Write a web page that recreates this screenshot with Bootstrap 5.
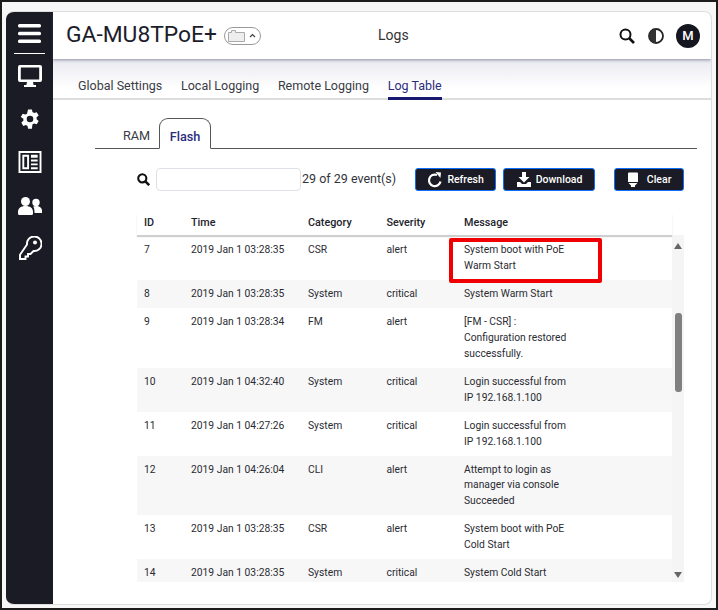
<!DOCTYPE html>
<html lang="en">
<head>
    <meta charset="UTF-8">
    <meta name="viewport" content="width=device-width, initial-scale=1.0">
    <title>Logs</title>
    <link rel="stylesheet" href="https://cdn.jsdelivr.net/npm/bootstrap@5.3.0/dist/css/bootstrap.min.css">
    <style>
        html, body { height: 100%; overflow: hidden; }
        body { font-family: Roboto, "Liberation Sans", sans-serif; color: #22232b; background: #fff; }
        .shot-frame { width: 718px; height: 610px; border: 2px solid #1c1c1c; padding: 9px 4px 3px 4px; background: #f7f7f7; }
        .app-card { height: 100%; background: #fff; border: 1px solid #ddd; border-left: 0; border-radius: 8px; overflow: hidden; }
        .side-rail { width: 47px; flex: none; background: #1a1b24; padding-top: 12px; }
        .side-rail svg { display: block; fill: #fff; }
        .rail-line { width: 31px; height: 1px; background: #fff; margin: 10px 0 11px; }
        .rail-gap { margin-bottom: 21px; }
        .rail-gap-wide { margin-bottom: 24px; }
        .top-bar { height: 47px; padding: 0 11px 0 13px; position: relative; z-index: 2; box-shadow: 0 1px 3px rgba(70,70,100,.55); background: #fff; }
        .dev-name { font-size: 22.8px; color: #1c1d2b; line-height: 1; }
        .port-pill { width: 37px; height: 18px; margin-left: 7px; border: 1px solid #999; border-radius: 9px; }
        .page-name { font-size: 14px; color: #333; position: absolute; left: 325px; top: 13px; }
        .contrast-icon { margin: 0 12px 0 13px; }
        .avatar-dot { width: 24px; height: 24px; border-radius: 50%; background: #15161f; color: #fff; font-size: 13px; font-weight: 500; }
        .sub-tabs { height: 41px; padding-left: 25px; gap: 18.7px; background: linear-gradient(#e9e9f1, #fff 75%); border-bottom: 2px solid #ddd; }
        .sub-tabs .nav-link { padding: 0; height: 41px; line-height: 54px; font-size: 12.5px; color: #3a3b44; }
        .sub-tabs .nav-link.active { color: #2b2c7c; border-bottom: 3px solid #17186e; }
        .log-pane { padding: 18px 14px 0 42px; }
        .log-tabs { border-bottom: 1px solid #555; height: 31px; padding-left: 28px; }
        .log-tabs .nav-link { padding: 0; font-size: 12.7px; height: 31px; line-height: 35px; color: #3a3b44; border: 0; }
        .log-tabs .ram-tab { width: 36px; }
        .log-tabs .nav-link.active { width: 52px; text-align: center; color: #2b2c7c; font-weight: 500; border: 1px solid #555; border-bottom: 1px solid #fff; border-radius: 9px 9px 0 0; background: #fff; }
        .tool-row { padding: 19px 14px 0 84px; height: 42px; }
        .find-box { width: 145px; height: 23px; margin-left: 6px; padding: 0 6px; border: 1px solid #dde0e6; border-radius: 4px; font-size: 12px; }
        .find-count { font-size: 12.5px; margin-left: 1px; color: #33343c; white-space: nowrap; }
        .dark-btn { height: 23px; padding: 0; font-size: 10.5px; font-weight: 500; background: #1a1b24; color: #fff; border: 1px solid #0d6efd; border-radius: 3px; }
        .dark-btn svg { fill: #fff; flex: none; }
        .refresh-btn { width: 81px; margin-left: 19px; }
        .download-btn { width: 92px; margin-left: 7px; }
        .clear-btn { width: 70px; margin-left: 19px; }
        .log-box { margin: 22px 0 0 84px; width: 547px; height: 368px; position: relative; }
        .log-head { font-size: 10.8px; font-weight: 500; height: 22px; width: 535px; line-height: 20px; box-shadow: 0 2px 1px #cfcfcf; position: relative; z-index: 1; }
        .log-rows { width: 535px; height: 347px; padding-top: 1px; overflow: hidden; }
        .log-table { table-layout: fixed; width: 535px; margin: 0; font-size: 10.3px; line-height: 15.65px; color: #2a2b33; }
        .log-table td { padding: 6.3px 7px; vertical-align: top; border: 0; }
        .log-head span { display: block; padding: 0 7px; }
        .log-table tr:nth-child(even) td { background: #f7f7f7; }
        .msg-text { max-width: 112px; }
        .col-id { width: 47px; } .col-time { width: 117px; } .col-cat { width: 78.5px; } .col-sev { width: 77.5px; }
        .head-msg { flex: 1; }
        .fake-scroll { width: 12px; flex: none; height: 347px; background: #f5f5f5; padding-top: 8px; }
        .scroll-up { border: 4px solid transparent; border-top: 0; border-bottom: 6px solid #666; }
        .scroll-down { border: 4px solid transparent; border-bottom: 0; border-top: 6px solid #666; margin-bottom: 4px; }
        .scroll-thumb { width: 7px; height: 79px; background: #808080; border-radius: 3px; margin-top: 64px; }
        .scroll-fill { flex: 1; }
        .red-mark { position: absolute; left: 312px; top: 25px; width: 153px; height: 45px; border: 4px solid #f00000; border-radius: 2px; }
    </style>
</head>
<body>
<div class="shot-frame">
<div class="app-card d-flex">
    <div class="side-rail d-flex flex-column align-items-center">
        <svg width="23" height="19" viewBox="0 0 23 19"><rect width="23" height="3.4" rx="1.5"/><rect y="7.8" width="23" height="3.4" rx="1.5"/><rect y="15.6" width="23" height="3.4" rx="1.5"/></svg>
        <div class="rail-line"></div>
        <svg class="rail-gap" width="24" height="22" viewBox="0 0 24 22"><path fill-rule="evenodd" d="M2 0h20a2 2 0 0 1 2 2v13a2 2 0 0 1-2 2h-7l.6 3H18v2H6v-2h2.4l.6-3H2a2 2 0 0 1-2-2V2a2 2 0 0 1 2-2zm.8 2.6v11.8h18.4V2.6z"/></svg>
        <svg class="rail-gap" width="22" height="22" viewBox="0 0 16 16"><path fill-rule="evenodd" d="M9.4 1l.4 1.9a5.4 5.4 0 0 1 1.2.7l1.9-.6 1.4 2.4-1.5 1.3a5.4 5.4 0 0 1 0 1.4l1.500 1.300-1.400 2.400-1.900-.6a5.400 5.400 0 0 1-1.200.7L9.400 15H6.600l-.4-1.900a5.400 5.400 0 0 1-1.200-.7l-1.900.6-1.400-2.400 1.500-1.300a5.400 5.400 0 0 1 0-1.400L1.300 6.600l1.400-2.400 1.900.6a5.400 5.400 0 0 1 1.200-.7L6.600 1zM8 5.600a2.400 2.400 0 1 0 0 4.800 2.400 2.400 0 0 0 0-4.800z"/></svg>
        <svg class="rail-gap-wide" width="24" height="22" viewBox="0 0 24 23"><path fill-rule="evenodd" d="M0 0h24v23H0zm2 2v19h20V2zm2 2h7v15H4zm2 2v11h3V6zm7-2h7v3h-7zm0 5h7v2h-7zm0 4h7v2h-7zm0 4h7v2h-7z"/></svg>
        <svg class="rail-gap" width="24" height="18" viewBox="0 0 24 18"><circle cx="7.5" cy="4.5" r="4.5"/><circle cx="18" cy="5.5" r="3.7"/><path d="M0 15c0-4 3-6 7.500-6s7.500 2 7.500 6v1.500a1.500 1.500 0 0 1-1.500 1.500h-12A1.500 1.500 0 0 1 0 16.500z"/><path d="M16.500 16h7.500v-2.500c0-2.500-2.500-4.500-6-4.500-1 0-2 .2-2.800.5 1 1.300 1.300 3.500 1.300 6.500z"/></svg>
        <svg width="24" height="25" viewBox="0 0 24 25"><path fill="none" stroke="#fff" stroke-width="1.900" d="M9 8.500a7.300 7.300 0 1 1 6.500 6.500L12.500 18H10v2.500H7.500V23H2v-4.200z"/><circle cx="17" cy="6.500" r="2"/></svg>
    </div>
    <div class="flex-grow-1">
        <div class="top-bar d-flex align-items-center">
            <span class="dev-name">GA-MU8TPoE+</span>
            <span class="port-pill d-flex align-items-center justify-content-center gap-1">
                <svg width="17" height="12" viewBox="0 0 17 12"><path fill="#eee" stroke="#aaa" d="M.5 11.500v-9h3v-2h4v2h9v9z"/></svg>
                <svg width="7" height="5" viewBox="0 0 7 5"><path fill="none" stroke="#444" stroke-width="1.200" d="M1 4l2.500-2.500L6 4"/></svg>
            </span>
            <span class="page-name">Logs</span>
            <div class="ms-auto d-flex align-items-center">
                <svg width="16" height="16" viewBox="0 0 16 16"><circle cx="6.500" cy="6.500" r="5" fill="none" stroke="#111" stroke-width="2"/><path d="M10 10l5 5" stroke="#111" stroke-width="2.600"/></svg>
                <svg class="contrast-icon" width="16" height="16" viewBox="0 0 16 16"><circle cx="8" cy="8" r="7" fill="#fff" stroke="#222" stroke-width="1.800"/><path d="M8 1a7 7 0 0 0 0 14z" fill="#333"/></svg>
                <span class="avatar-dot d-flex align-items-center justify-content-center">M</span>
            </div>
        </div>
        <nav class="nav sub-tabs">
            <a class="nav-link" href="#">Global Settings</a>
            <a class="nav-link" href="#">Local Logging</a>
            <a class="nav-link" href="#">Remote Logging</a>
            <a class="nav-link active" href="#">Log Table</a>
        </nav>
        <div class="log-pane">
            <ul class="nav log-tabs">
                <li class="nav-item"><a class="nav-link ram-tab" href="#">RAM</a></li>
                <li class="nav-item"><a class="nav-link active" href="#">Flash</a></li>
            </ul>
        </div>
        <div class="tool-row d-flex align-items-center">
            <svg width="13" height="13" viewBox="0 0 16 16"><circle cx="6.500" cy="6.500" r="5" fill="none" stroke="#111" stroke-width="2.600"/><path d="M10 10l5 5" stroke="#111" stroke-width="3"/></svg>
            <input class="find-box" type="text">
            <span class="find-count">29 of 29 event(s)</span>
            <button class="btn dark-btn d-flex align-items-center justify-content-center gap-1 refresh-btn" type="button">
                <svg width="16" height="16" viewBox="0 0 16 16"><path fill="none" stroke="#fff" stroke-width="2.200" d="M13.500 9.500A5.800 5.800 0 1 1 10 3"/><path d="M8.500 0l5.500.6-.6 5.400z"/></svg>
                <span>Refresh</span>
            </button>
            <button class="btn dark-btn d-flex align-items-center justify-content-center gap-1 download-btn" type="button">
                <svg width="16" height="15" viewBox="0 0 16 15"><path d="M6 0h4v5h3.500L8 10.500 2.500 5H6z"/><path d="M1 10h3l2 2h4l2-2h3v5H1z"/></svg>
                <span>Download</span>
            </button>
            <button class="btn dark-btn d-flex align-items-center justify-content-center gap-2 clear-btn" type="button">
                <svg width="12" height="16" viewBox="0 0 12 16"><path d="M1 1.500a1 1 0 0 1 1-1h8a1 1 0 0 1 1 1V10H1zM1.500 11h9L8 13.500V15H4v-1.500z"/></svg>
                <span>Clear</span>
            </button>
        </div>
        <div class="log-box">
            <div class="log-head d-flex">
                <span class="col-id">ID</span><span class="col-time">Time</span><span class="col-cat">Category</span><span class="col-sev">Severity</span><span class="head-msg">Message</span>
            </div>
            <div class="d-flex">
                <div class="log-rows">
                    <table class="table log-table">
                        <colgroup><col class="col-id"><col class="col-time"><col class="col-cat"><col class="col-sev"><col></colgroup>
                        <tbody id="logBody"></tbody>
                    </table>
                </div>
                <div class="fake-scroll d-flex flex-column align-items-center">
                    <div class="scroll-up"></div>
                    <div class="scroll-thumb"></div>
                    <div class="scroll-fill"></div>
                    <div class="scroll-down"></div>
                </div>
            </div>
            <div class="red-mark"></div>
        </div>
    </div>
</div>
</div>
<script>
const logs = [
    ["7", "2019 Jan 1 03:28:35", "CSR", "alert", "System boot with PoE Warm Start"],
    ["8", "2019 Jan 1 03:28:35", "System", "critical", "System Warm Start"],
    ["9", "2019 Jan 1 03:28:34", "FM", "alert", "[FM - CSR] :<br>Configuration restored successfully."],
    ["10", "2019 Jan 1 04:32:40", "System", "critical", "Login successful from IP 192.168.1.100"],
    ["11", "2019 Jan 1 04:27:26", "System", "critical", "Login successful from IP 192.168.1.100"],
    ["12", "2019 Jan 1 04:26:04", "CLI", "alert", "Attempt to login as manager via console Succeeded"],
    ["13", "2019 Jan 1 03:28:35", "CSR", "alert", "System boot with PoE Cold Start"],
    ["14", "2019 Jan 1 03:28:35", "System", "critical", "System Cold Start"]
];
document.getElementById("logBody").innerHTML = logs.map(r =>
    `<tr><td>${r[0]}</td><td>${r[1]}</td><td>${r[2]}</td><td>${r[3]}</td><td><div class="msg-text">${r[4]}</div></td></tr>`
).join("");
</script>
<script src="https://cdn.jsdelivr.net/npm/bootstrap@5.3.0/dist/js/bootstrap.bundle.min.js"></script>
</body>
</html>
